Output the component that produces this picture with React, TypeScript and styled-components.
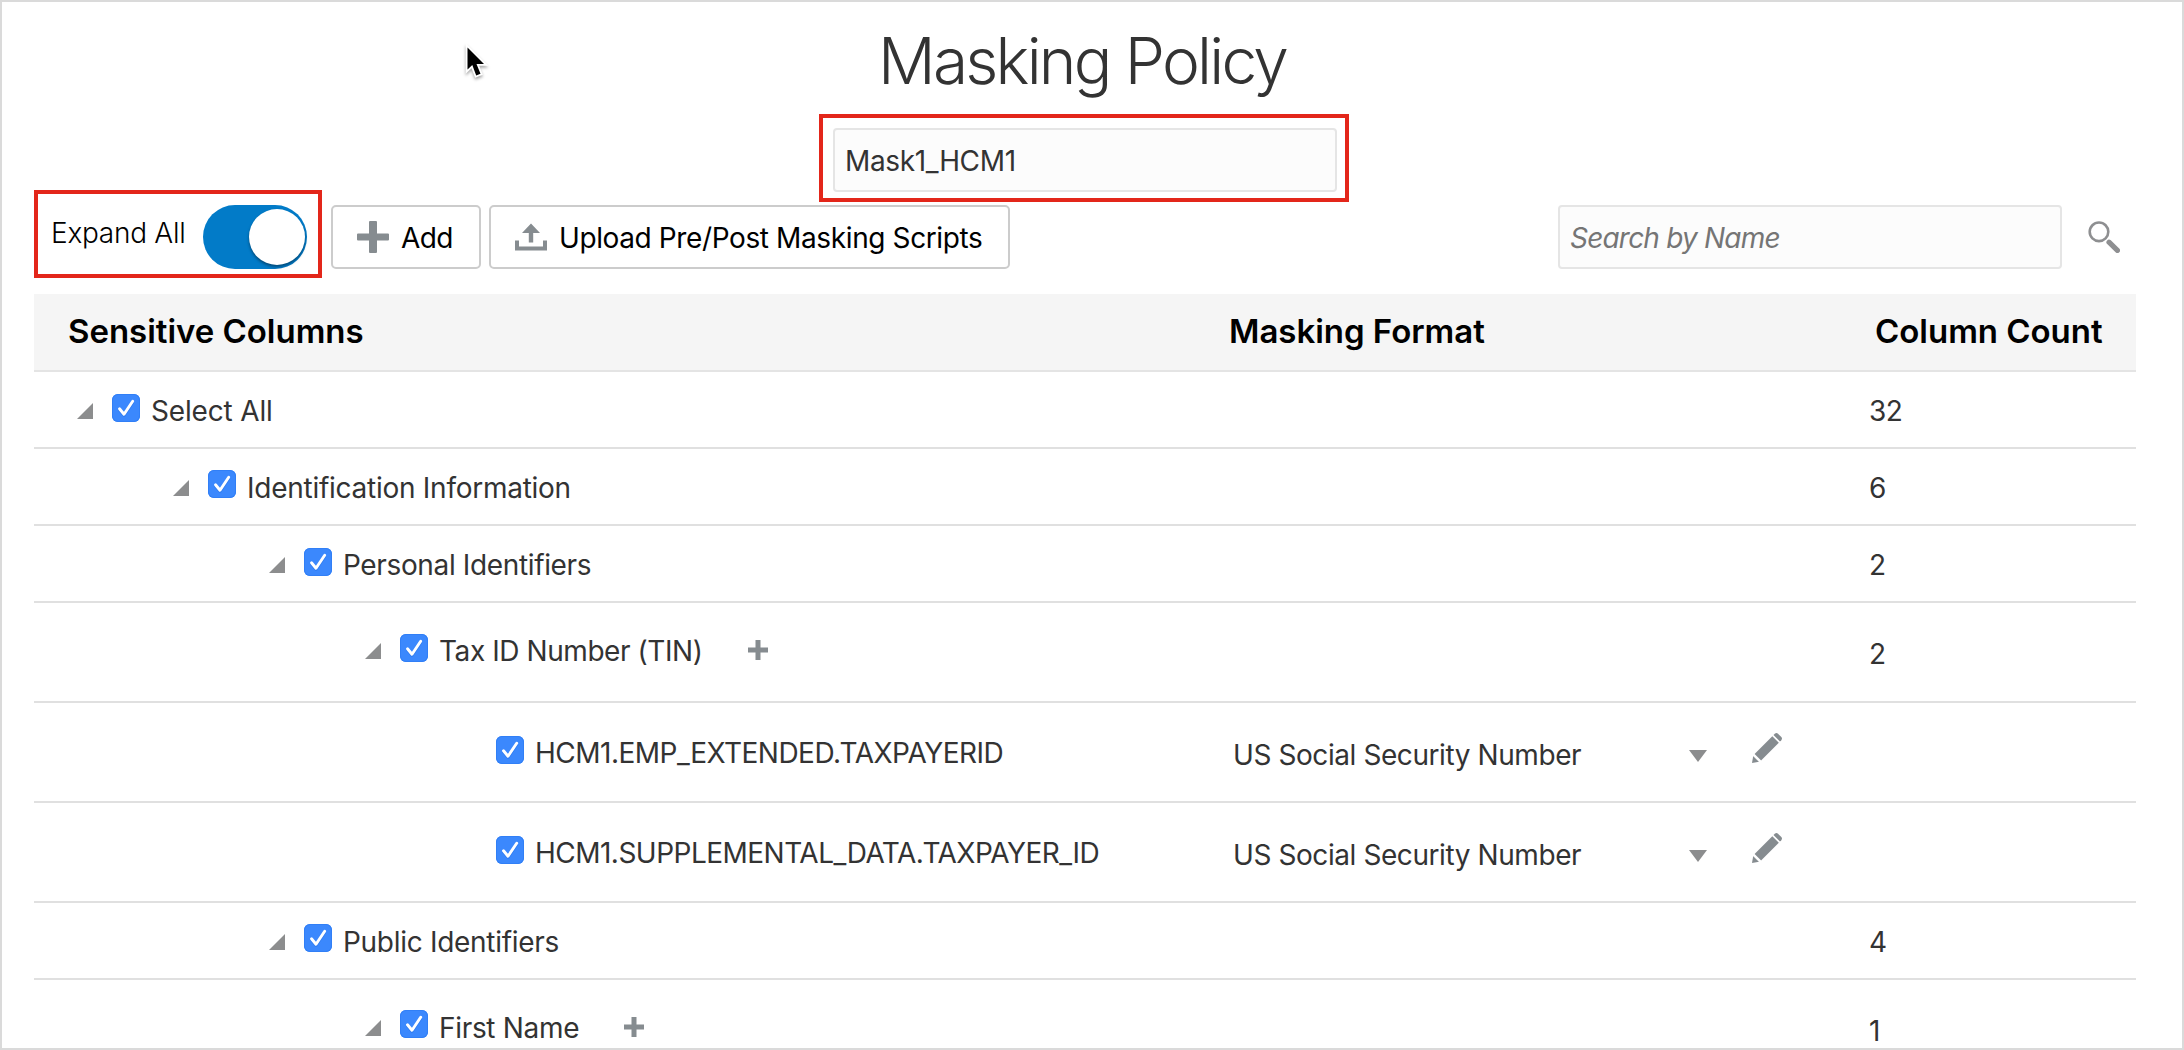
import React from "react";
import styled, { createGlobalStyle, css } from "styled-components";

const Global = createGlobalStyle`
  *, *::before, *::after { box-sizing: border-box; }
  html, body { margin: 0; padding: 0; background: #fff; }
  body, input, button { font-family: Inter, Roboto, "Liberation Sans", sans-serif; }
`;

const Page = styled.main`
  position: relative;
  display: flex;
  flex-direction: column;
  height: 1050px;
  padding: 20px 46px 0 32px;
  border: 2px solid #dadada;
  background: #fff;
  overflow: hidden;
`;

const highlight = css`
  position: relative;
  &::after {
    content: "";
    position: absolute;
    border: 4px solid #e3261a;
    pointer-events: none;
  }
`;

const Title = styled.h1`
  margin: 0 0 28px;
  padding-left: 844px;
  font-size: 64px;
  line-height: 78px;
  font-weight: 340;
  letter-spacing: -2.75px;
  color: #333;
  white-space: nowrap;
`;

const NameField = styled.div`
  ${highlight}
  width: 504px;
  height: 64px;
  margin-left: 799px;
  &::after {
    inset: -14px -12px -10px -14px;
  }
`;

const TextInput = styled.input<{ $spacing: number }>`
  display: block;
  width: 504px;
  height: 64px;
  padding: 2px 10px 0;
  border: 2px solid #e5e5e5;
  border-radius: 4px;
  background: #fcfcfc;
  color: #333;
  font-size: 28px;
  letter-spacing: ${(p) => p.$spacing}px;
  outline: none;
  &::placeholder {
    color: #757575;
    font-style: italic;
    opacity: 1;
  }
`;

const Toolbar = styled.div`
  display: flex;
  align-items: flex-start;
  height: 64px;
  margin: 13px 0 25px;
`;

const ToggleGroup = styled.label`
  ${highlight}
  display: flex;
  justify-content: space-between;
  width: 288px;
  height: 64px;
  padding: 0 15px 0 17px;
  margin-right: 9px;
  &::after {
    inset: -15px 0 -9px 0;
  }
`;

const ToggleText = styled.span`
  margin-top: 11px;
  font-size: 28px;
  line-height: 34px;
  font-weight: 300;
  letter-spacing: -0.27px;
  color: #000;
`;

const Track = styled.span`
  display: flex;
  justify-content: flex-end;
  align-items: center;
  width: 104px;
  height: 64px;
  padding-right: 2px;
  border-radius: 32px;
  background: #027bc8;
`;

const Knob = styled.span`
  width: 56px;
  height: 56px;
  border-radius: 50%;
  background: #fff;
  box-shadow: 0 2px 3px rgba(0, 0, 0, 0.4);
`;

const Button = styled.button<{ $width: number; $spacing: number }>`
  display: flex;
  align-items: center;
  gap: 12px;
  width: ${(p) => p.$width}px;
  height: 64px;
  margin-right: 8px;
  padding: 0 0 0 24px;
  border: 2px solid #ccc;
  border-radius: 5px;
  background: #fff;
  color: #000;
  font-size: 28px;
  line-height: 34px;
  letter-spacing: ${(p) => p.$spacing}px;
  white-space: nowrap;
  span {
    padding-top: 2px;
  }
`;

const Search = styled.div`
  display: flex;
  align-items: center;
  gap: 26px;
  margin-left: auto;
  padding-right: 16px;
`;

const grid = css`
  display: grid;
  grid-template-columns: 1195px 456px 144px 1fr;
  align-items: start;
`;

const HeaderRow = styled.div`
  ${grid}
  flex: none;
  height: 78px;
  border-bottom: 2px solid #e4e4e4;
  background: #f5f5f5;
`;

const HeaderCell = styled.div<{ $indent?: number }>`
  padding: 17px 0 0 ${(p) => p.$indent ?? 0}px;
  font-size: 33px;
  line-height: 40px;
  font-weight: 600;
  letter-spacing: -0.03px;
  color: #000;
  white-space: nowrap;
`;

const Row = styled.div<{ $tall?: boolean }>`
  ${grid}
  flex: none;
  height: ${(p) => (p.$tall ? 100 : 77)}px;
  border-bottom: 2px solid #e0e0e0;
  font-size: 28px;
  line-height: 34px;
  color: #333;
  white-space: nowrap;
`;

const TreeCell = styled.div<{ $level: number; $top: number }>`
  display: flex;
  align-items: flex-start;
  padding: ${(p) => p.$top}px 0 0 ${(p) => 43 + p.$level * 96}px;
`;

const Disclosure = styled.svg<{ $hidden: boolean }>`
  flex: none;
  width: 16px;
  height: 16px;
  margin: 9px 19px 0 0;
  visibility: ${(p) => (p.$hidden ? "hidden" : "visible")};
`;

const CheckBox = styled.span<{ $lift: number }>`
  flex: none;
  width: 28px;
  height: 28px;
  margin: ${(p) => -p.$lift}px 11px 0 0;
  border-radius: 6px;
  background: #3b88fd;
  box-shadow: inset 0 0 0 1px #317ff6;
  svg {
    display: block;
  }
`;

const Label = styled.span<{ $spacing: number }>`
  letter-spacing: ${(p) => p.$spacing}px;
`;

const AddIcon = styled.svg`
  flex: none;
  width: 20px;
  height: 20px;
  margin: 6px 0 0 45px;
`;

const FormatCell = styled.div`
  padding: 35px 0 0 4px;
  letter-spacing: -0.42px;
`;

const ActionCell = styled.div`
  display: flex;
  align-items: flex-start;
  gap: 45px;
  padding: 30px 0 0 4px;
`;

const Arrow = styled.svg`
  width: 18px;
  height: 12px;
  margin-top: 17px;
`;

const CountCell = styled.div<{ $top: number }>`
  grid-column: 4;
  padding: ${(p) => p.$top}px 0 0 40px;
  letter-spacing: -0.5px;
`;

const Pointer = styled.svg`
  position: absolute;
  left: 460px;
  top: 40px;
  filter: drop-shadow(0 2px 1.5px rgba(0, 0, 0, 0.35));
`;

const Plus = () => (
  <svg width="32" height="32" viewBox="0 0 32 32">
    <path d="M13 0h6q1 0 1 1v11.5h11q1 0 1 1v5q0 1-1 1H20V31q0 1-1 1h-6q-1 0-1-1V19.500H1q-1 0-1-1v-5q0-1 1-1h11V1q0-1 1-1z" fill="#868c90" />
  </svg>
);

const UploadIcon = () => (
  <svg width="32" height="32" viewBox="0 0 32 32">
    <path d="M2 19.500V27.500H30V19.500" fill="none" stroke="#868c90" strokeWidth="4" />
    <path d="M16 2.500L25 12H18.200V21.500H13.800V12H7Z" fill="#868c90" />
  </svg>
);

const Magnifier = () => (
  <svg width="32" height="32" viewBox="0 0 32 32">
    <circle cx="11" cy="10.800" r="9.300" fill="none" stroke="#8e8f91" strokeWidth="2.600" />
    <path d="M21 21.200L29.400 29.400" stroke="#8e8f91" strokeWidth="5.200" strokeLinecap="round" />
  </svg>
);

const Pencil = () => (
  <svg width="30" height="30" viewBox="0 0 30 30">
    <g fill="#868c90">
      <path d="M0 30L1.200 22.900L7.100 28.800Z" />
      <path d="M2.600 20.900L20.300 3.200L26.800 9.700L9.100 27.400Z" />
      <path d="M21.500 2L22.800 0.700Q24.500 -0.700 26 0.700L29.300 4Q30.700 5.500 29.300 7.200L28 8.500Z" />
    </g>
    <path d="M1 22.500L7.500 29" stroke="#fff" strokeOpacity="0.500" strokeWidth="1" />
  </svg>
);

const Check = () => (
  <svg width="28" height="28" viewBox="0 0 28 28">
    <path d="M7.500 16L12 21.300L20.700 8.500" fill="none" stroke="#1f6be0" strokeOpacity="0.450" strokeWidth="3" strokeLinecap="round" strokeLinejoin="round" />
    <path d="M7.500 14.800L12 20.200L20.700 7.300" fill="none" stroke="#fff" strokeWidth="2.900" strokeLinecap="round" strokeLinejoin="round" />
  </svg>
);

type Item = {
  label: string;
  level: number;
  spacing: number;
  lift: number;
  top: number;
  countTop?: number;
  count?: string;
  tall?: boolean;
  addable?: boolean;
  format?: string;
};

const items: Item[] = [
  { label: "Select All", level: 0, spacing: -0.16, top: 22, lift: 0, count: "32" },
  { label: "Identification Information", level: 1, spacing: -0.26, top: 22, lift: 1, count: "6" },
  { label: "Personal Identifiers", level: 2, spacing: -0.36, top: 22, lift: 0, count: "2" },
  { label: "Tax ID Number (TIN)", level: 3, spacing: -0.43, top: 31, lift: 0, count: "2", countTop: 34, tall: true, addable: true },
  { label: "HCM1.EMP_EXTENDED.TAXPAYERID", level: 4, spacing: -0.51, top: 33, lift: 0, tall: true, format: "US Social Security Number" },
  { label: "HCM1.SUPPLEMENTAL_DATA.TAXPAYER_ID", level: 4, spacing: -0.52, top: 33, lift: 0, tall: true, format: "US Social Security Number" },
  { label: "Public Identifiers", level: 2, spacing: -0.29, top: 22, lift: 1, count: "4" },
  { label: "First Name", level: 3, spacing: -0.32, top: 31, lift: 1, count: "1", countTop: 34, tall: true, addable: true },
];

export default function App() {
  return (
    <>
      <Global />
      <Page>
        <Title>Masking Policy</Title>
        <NameField>
          <TextInput $spacing={-0.35} defaultValue="Mask1_HCM1" />
        </NameField>
        <Toolbar>
          <ToggleGroup>
            <ToggleText>Expand All</ToggleText>
            <Track>
              <Knob />
            </Track>
          </ToggleGroup>
          <Button $width={150} $spacing={-0.6}>
            <Plus />
            <span>Add</span>
          </Button>
          <Button $width={521} $spacing={-0.385}>
            <UploadIcon />
            <span>Upload Pre/Post Masking Scripts</span>
          </Button>
          <Search>
            <TextInput $spacing={-0.8} placeholder="Search by Name" />
            <Magnifier />
          </Search>
        </Toolbar>
        <HeaderRow>
          <HeaderCell $indent={34}>Sensitive Columns</HeaderCell>
          <HeaderCell>Masking Format</HeaderCell>
          <div />
          <HeaderCell $indent={46}>Column Count</HeaderCell>
        </HeaderRow>
        {items.map((it) => (
          <Row key={it.label} $tall={it.tall}>
            <TreeCell $level={it.level} $top={it.top}>
              <Disclosure $hidden={!!it.format} viewBox="0 0 16 16">
                <path d="M16 0V16H0Z" fill="#8c8d8e" />
              </Disclosure>
              <CheckBox $lift={it.lift}>
                <Check />
              </CheckBox>
              <Label $spacing={it.spacing}>{it.label}</Label>
              {it.addable && (
                <AddIcon viewBox="0 0 20 20">
                  <path d="M10 0V20M0 10H20" stroke="#868c90" strokeWidth="5" />
                </AddIcon>
              )}
            </TreeCell>
            {it.format && (
              <>
                <FormatCell>{it.format}</FormatCell>
                <ActionCell>
                  <Arrow viewBox="0 0 18 12">
                    <path d="M0 0H18L9 12Z" fill="#8c8d8e" />
                  </Arrow>
                  <Pencil />
                </ActionCell>
              </>
            )}
            {it.count && <CountCell $top={it.countTop ?? 22}>{it.count}</CountCell>}
          </Row>
        ))}
        <Pointer width="34" height="44" viewBox="0 0 34 44">
          <path
            d="M5.500 5.500V27.500L10.300 23L14.200 33.500L18.500 31.800L14.500 22H22Z"
            fill="#000"
            stroke="#fff"
            strokeWidth="3.600"
            paintOrder="stroke"
          />
        </Pointer>
      </Page>
    </>
  );
}
